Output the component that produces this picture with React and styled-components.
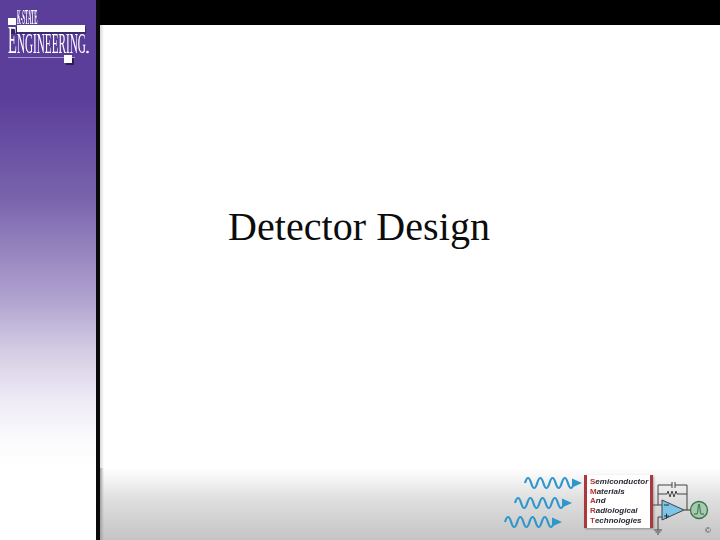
import React from 'react';
import styled, { createGlobalStyle } from 'styled-components';

const Global = createGlobalStyle`
    html, body {
        margin: 0;
        padding: 0;
        background: white;
    }
`;

const Page = styled.div`
    width: 720px;
    height: 540px;
    display: flex;
    overflow: hidden;
    font-family: "Liberation Serif", serif;
`;

const Sidebar = styled.aside`
    width: 96px;
    flex-shrink: 0;
    background: linear-gradient(
        #5b3e9a 0%,
        #5b3e9a 18.5%,
        #7a64ad 37%,
        #b0a3cf 55.5%,
        #d4cde4 65%,
        #eeeaf5 74%,
        #fbfbfd 81.5%,
        #ffffff 87%
    );
`;

const Divider = styled.div`
    width: 4px;
    flex-shrink: 0;
    background: #0a0a0a;
`;

const Main = styled.main`
    flex: 1;
    display: flex;
    flex-direction: column;
    min-width: 0;
    background: linear-gradient(90deg, #d8d8d8 0, #ffffff 4px);
`;

const TopBar = styled.div`
    height: 25px;
    flex-shrink: 0;
    background: #000;
`;

const Stage = styled.section`
    flex: 1;
    padding: 179px 0 0 128px;
`;

const Title = styled.h1`
    margin: 0;
    font-size: 40px;
    font-weight: 400;
    line-height: 46px;
    letter-spacing: 0.07px;
    color: #0c0c0c;
`;

const Footer = styled.footer`
    height: 72px;
    flex-shrink: 0;
    display: flex;
    justify-content: flex-end;
    align-items: flex-start;
    padding-right: 8px;
    background: linear-gradient(90deg, #a0a0a0 0, rgba(160, 160, 160, 0) 4px),
        linear-gradient(#ffffff 0%, #dedede 45%, #c4c4c4 100%);
`;

const Card = styled.div`
    width: 60px;
    height: 51px;
    margin-top: 7px;
    padding: 2px 0 0 3px;
    border-left: 3px solid #a83a3e;
    border-right: 3px solid #a83a3e;
    background: #fff;
    box-shadow: 1px 1px 2px rgba(0, 0, 0, 0.3);
    font-family: "Liberation Sans", sans-serif;
    font-size: 8px;
    font-weight: 700;
    line-height: 9.7px;
    color: #2a2a35;
    filter: blur(0.3px);
`;

const CardLine = styled.div`
    white-space: nowrap;
    font-style: italic;
`;

const Initial = styled.span`
    color: #b8352f;
    font-style: normal;
`;

const Art = styled.svg`
    display: block;
    flex-shrink: 0;
    filter: blur(${(p) => p.$blur || 0.4}px);
`;

const cardLines = [
    ['S', 'emiconductor'],
    ['M', 'aterials'],
    ['A', 'nd'],
    ['R', 'adiological'],
    ['T', 'echnologies'],
];

const KStateLogo = () => (
    <Art width="96" height="70" viewBox="0 0 96 70">
        <rect x="10" y="27" width="8" height="7" fill="#33245f" />
        <rect x="8" y="18" width="8" height="7" fill="#fff" />
        <text transform="translate(17 24) scale(0.23 1)" fontFamily="Liberation Serif" fontSize="21" fontWeight="700" fill="#fff">K-STATE</text>
        <rect x="19" y="27" width="67" height="7" fill="#3a2a70" />
        <rect x="17" y="25" width="68" height="7" fill="#fff" />
        <text transform="translate(8 53) scale(0.373 1)" fontFamily="Liberation Serif" fontSize="30" fill="#fff">
            <tspan fontSize="39">E</tspan>NGINEERING
        </text>
        <circle cx="87.5" cy="52" r="1.3" fill="#fff" />
        <rect x="8" y="57" width="67" height="1" fill="#a79ad0" />
        <rect x="66" y="58" width="8" height="7" fill="#2b1e55" />
        <rect x="64" y="55" width="8" height="8" fill="#fff" />
    </Art>
);

const Wave = ({ y, x, w }) => {
    let d = `M${x} ${y}`;
    const step = (w - 8) / 4;
    for (let i = 0; i < 4; i++) {
        d += ` q${step / 4} -10 ${step / 2} 0 t${step / 2} 0`;
    }
    return (
        <g>
            <path d={d} fill="none" stroke="#2f97cc" strokeWidth="2.2" />
            <path d={`M${x + w - 10} ${y - 4.5} L${x + w} ${y} L${x + w - 10} ${y + 4.5} Z`} fill="#2f97cc" />
        </g>
    );
};

const Waves = () => (
    <Art width="92" height="72" viewBox="0 0 92 72">
        <Wave x={33} y={15} w={57} />
        <Wave x={23} y={35} w={57} />
        <Wave x={13} y={54} w={57} />
    </Art>
);

const Circuit = () => (
    <Art width="59" height="72" viewBox="0 0 59 72" $blur={0.3}>
        <g fill="none" stroke="#444" strokeWidth="1">
            <path d="M0 37 H9" />
            <path d="M5 37 V17 H19 M22 17 H34 V42" />
            <path d="M19 14 V20 M22 14 V20" />
            <path d="M5 26 H14 L15 23 L17 29 L19 23 L21 29 L23 23 L24 26 H34" />
            <path d="M9 49 H5 V62" />
            <path d="M1 62 H9 M2.5 64 H7.5 M4 66 H6" />
        </g>
        <path d="M9 32 L31 42 L9 52 Z" fill="#7cc4e8" stroke="#333" strokeWidth="0.9" />
        <path d="M31 42 H38" stroke="#333" strokeWidth="1" />
        <path d="M11 37 H16 M11 48 H16 M13.5 45.5 V50.5" stroke="#222" strokeWidth="0.9" />
        <circle cx="46" cy="42" r="8.5" fill="#a3cca8" stroke="#3c7050" strokeWidth="1.3" />
        <path d="M41 46 H44 C45 46 45 36 46 36 C47 36 47 46 48 46 H51" fill="none" stroke="#244" strokeWidth="0.8" />
        <text x="52" y="65" fontFamily="Liberation Sans" fontSize="8" fill="#444">©</text>
    </Art>
);

const App = () => {
    return (
        <Page>
            <Global />
            <Sidebar>
                <KStateLogo />
            </Sidebar>
            <Divider />
            <Main>
                <TopBar />
                <Stage>
                    <Title>Detector Design</Title>
                </Stage>
                <Footer>
                    <Waves />
                    <Card>
                        {cardLines.map(([first, rest]) => (
                            <CardLine key={first}>
                                <Initial>{first}</Initial>
                                {rest}
                            </CardLine>
                        ))}
                    </Card>
                    <Circuit />
                </Footer>
            </Main>
        </Page>
    );
};

export default App;
